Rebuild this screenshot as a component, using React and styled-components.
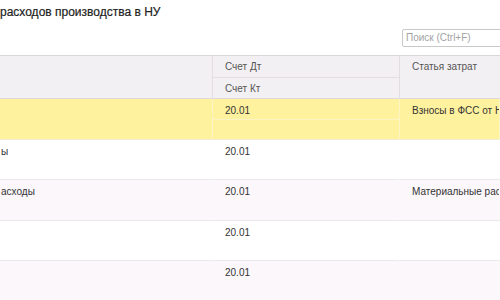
import React from "react";
import styled, { createGlobalStyle } from "styled-components";

const Global = createGlobalStyle`
  html, body { margin: 0; padding: 0; background: #fff; }
  body { font-family: "Liberation Sans", Arial, sans-serif; color: #333; }
  #root { width: 500px; height: 300px; overflow: hidden; }
`;

const Page = styled.div`
  width: 500px;
  height: 300px;
  overflow: hidden;
  display: flex;
  flex-direction: column;
`;

const Title = styled.div`
  font-size: 12px;
  line-height: 14px;
  padding-top: 5px;
  height: 14px;
  white-space: nowrap;
  color: #222;
  -webkit-text-stroke: 0.2px #222;
`;

const Toolbar = styled.div`
  display: flex;
  justify-content: flex-end;
  height: 18px;
  margin-top: 10px;
  margin-bottom: 8px;
`;

const Search = styled.div`
  flex: 0 0 auto;
  width: 110px;
  margin-right: -12px;
  box-sizing: border-box;
  height: 18px;
  border: 1px solid #c9c9c9;
  border-radius: 2px;
  font-size: 10px;
  line-height: 16px;
  padding-left: 3px;
  color: #a3a3a3;
  white-space: nowrap;
`;

const Grid = styled.div`
  display: grid;
  grid-template-columns: 213px 187px 1fr;
  border-top: 1px solid #d9d6d9;
`;

const HeadCell = styled.div`
  background: #f3f0f3;
  border-right: ${(p) => (p.$last ? "none" : "1px solid #e2dee2")};
  border-bottom: 1px solid #dcd8dc;
  font-size: 10px;
  color: #555;
  display: flex;
  flex-direction: column;
`;

const HeadSub = styled.div`
  height: 21px;
  box-sizing: border-box;
  padding: 5px 0 0 12px;
  border-top: ${(p) => (p.$second ? "1px solid #e2dee2" : "none")};
  white-space: nowrap;
`;

const Cell = styled.div`
  background: ${(p) => p.$bg};
  border-right: 1px solid ${(p) => p.$line};
  border-bottom: 1px solid ${(p) => (p.$sel ? "#f1ecd8" : "#ebe8eb")};
  font-size: 10px;
  color: #333;
  height: 40.5px;
  box-sizing: border-box;
  display: flex;
  flex-direction: column;
  white-space: nowrap;
  overflow: hidden;
`;

const Sub = styled.div`
  height: 20px;
  box-sizing: border-box;
  padding: ${(p) => (p.$pad ? `6px 0 0 ${p.$pad}px` : "6px 0 0 0")};
  border-top: ${(p) => (p.$second ? `1px solid ${p.$line}` : "none")};
`;

const rows = [
  { name: "", acc: "20.01", cost: "Взносы в ФСС от НС и ПЗ", sel: true },
  { name: "ы", acc: "20.01", cost: "" },
  { name: "асходы", acc: "20.01", cost: "Материальные расходы" },
  { name: "", acc: "20.01", cost: "" },
  { name: "", acc: "20.01", cost: "" },
];

export default function App() {
  return (
    <Page>
      <Global />
      <Title>расходов производства в НУ</Title>
      <Toolbar>
        <Search>Поиск (Ctrl+F)</Search>
      </Toolbar>
      <Grid>
        <HeadCell />
        <HeadCell>
          <HeadSub>Счет Дт</HeadSub>
          <HeadSub $second>Счет Кт</HeadSub>
        </HeadCell>
        <HeadCell $last>
          <HeadSub>Статья затрат</HeadSub>
        </HeadCell>
        {rows.map((r, i) => {
          const bg = r.sel ? "#fff29e" : i % 2 === 0 ? "#fbf7fb" : "#ffffff";
          const line = r.sel ? "#fdf3c3" : bg;
          return (
            <React.Fragment key={i}>
              <Cell $bg={bg} $line={line} $sel={r.sel}>
                <Sub $pad={1}>{r.name}</Sub>
              </Cell>
              <Cell $bg={bg} $line={line} $sel={r.sel}>
                <Sub $pad={12}>{r.acc}</Sub>
                <Sub $second $line={line} />
              </Cell>
              <Cell $bg={bg} $line={line} $sel={r.sel}>
                <Sub $pad={12}>{r.cost}</Sub>
              </Cell>
            </React.Fragment>
          );
        })}
      </Grid>
    </Page>
  );
}
